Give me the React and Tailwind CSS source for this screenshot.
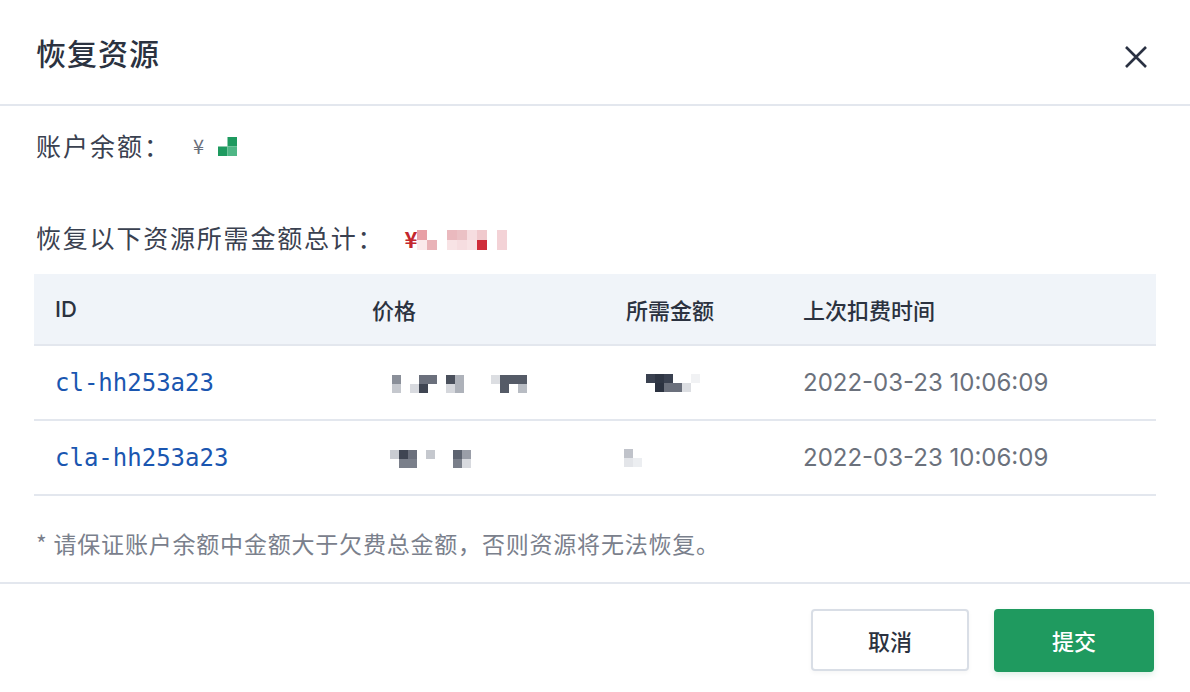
import React from "react";

const CJK = { fontFamily: '"Noto Sans CJK SC", "Noto Sans", sans-serif' };

// pixelated redaction blocks: [col, row, color]
function Mosaic({ cells, size = 9, rows = 2, cols = 15, className = "" }) {
  return (
    <svg
      width={cols * size}
      height={rows * size}
      viewBox={`0 0 ${cols * size} ${rows * size}`}
      className={className}
    >
      {cells.map(([c, r, fill], i) => (
        <rect key={i} x={c * size} y={r * size} width={size} height={size} fill={fill} />
      ))}
    </svg>
  );
}

const rows = [
  {
    id: "cl-hh253a23",
    price: {
      cols: 15,
      pl: "pl-[41px]",
      cells: [
        [0, 0, "#8a8f99"], [0, 1, "#c5c8ce"],
        [2, 1, "#d8dadf"], [3, 0, "#6b707c"], [3, 1, "#3f4552"], [4, 0, "#6b707c"],
        [6, 0, "#4a505c"], [6, 1, "#d5d7dc"], [7, 0, "#aeb2ba"], [7, 1, "#aeb2ba"],
        [11, 0, "#dcdee2"], [12, 0, "#555b67"], [12, 1, "#555b67"], [13, 0, "#555b67"],
        [14, 0, "#555b67"], [14, 1, "#b8bcc3"],
      ],
    },
    amount: {
      cols: 6,
      cells: [
        [0, 0, "#3a4150"], [1, 0, "#2f3644"], [2, 0, "#3a4150"],
        [1, 1, "#2b3240"], [2, 1, "#6b707c"], [3, 1, "#6b707c"], [4, 1, "#dcdee2"], [5, 0, "#f1f2f4"],
      ],
      pl: "pl-[41px]",
    },
    time: "2022-03-23 10:06:09",
  },
  {
    id: "cla-hh253a23",
    price: {
      cols: 10,
      pl: "pl-[39px]",
      cells: [
        [0, 0, "#c9ccd2"], [1, 0, "#3f4552"], [2, 0, "#6b707c"],
        [1, 1, "#7a7f8a"], [2, 1, "#7a7f8a"],
        [4, 0, "#c5c8ce"],
        [7, 0, "#5d6370"], [8, 0, "#9a9ea8"], [7, 1, "#7a7f8a"], [8, 1, "#d8dadf"],
      ],
    },
    amount: {
      cols: 2,
      cells: [[0, 0, "#c0c3ca"], [0, 1, "#e3e5e9"], [1, 1, "#eceef1"]],
      pl: "pl-[19px]",
    },
    time: "2022-03-23 10:06:09",
  },
];

const totalCells = [
  [0, 0, "#e8a0a6"], [0, 1, "#fbe9eb"], [1, 1, "#e9b2b7"],
  [3, 0, "#eab9be"], [4, 0, "#ebc1c5"], [3, 1, "#f8e3e5"], [4, 1, "#f6dde0"],
  [5, 1, "#f8e3e5"], [5, 0, "#f6dde0"], [6, 0, "#f0c9cd"], [6, 1, "#cf2e3a"],
  [8, 0, "#f3d2d6"], [8, 1, "#f3d2d6"],
];

export default function App() {
  return (
    <div className="w-[1190px] h-[692px] bg-white text-[#2b3240] flex flex-col" style={CJK}>
      {/* header */}
      <div className="h-[106px] px-[36px] flex items-center justify-between border-b-2 border-[#e3e7ee] shrink-0">
        <h1 className="text-[30px] font-medium tracking-[1px] text-[#2b3240]">恢复资源</h1>
        <button className="mt-[10px] mr-[6px] text-[#2a3142]">
          <svg width="24" height="24" viewBox="0 0 24 24" fill="none" stroke="currentColor" strokeWidth="2.6">
            <path d="M2 2 L22 22 M22 2 L2 22" />
          </svg>
        </button>
      </div>

      {/* body */}
      <div className="px-[34px] pt-[22px] flex-1">
        <div className="h-[36px] flex items-center pl-[2px] text-[25px] text-[#3a4150]">
          <span className="tracking-[2px]">账户余额：</span>
          <span className="ml-[22px] text-[20px] text-[#6b707c]">¥</span>
          <Mosaic
            className="ml-[14px]"
            size={9.5}
            cols={2}
            cells={[[1, 0, "#1e9a5f"], [0, 1, "#1e9a5f"], [1, 1, "#4fb786"]]}
          />
        </div>

        <div className="mt-[56px] h-[36px] flex items-center pl-[2px] text-[25px] text-[#3a4150]">
          <span className="tracking-[1.8px]">恢复以下资源所需金额总计：</span>
          <span className="ml-[20px] text-[22px] font-bold text-[#c4262e]">¥</span>
          <Mosaic size={10} cols={9} cells={totalCells} className="mt-[4px]" />
        </div>

        {/* table */}
        <div className="mt-[18px]">
          <div className="grid grid-cols-[317px_254px_177px_1fr] h-[72px] items-center bg-[#f0f4f9] border-b-2 border-[#e3e7ee] text-[22px] font-medium text-[#2b3240]">
            <div className="pl-[21px]" style={{ fontFamily: "Inter, sans-serif" }}>ID</div>
            <div className="pl-[21px]">价格</div>
            <div className="pl-[21px]">所需金额</div>
            <div className="pl-[21px]">上次扣费时间</div>
          </div>
          {rows.map((r) => (
            <div
              key={r.id}
              className="grid grid-cols-[317px_254px_177px_1fr] h-[75px] items-center border-b-2 border-[#e3e7ee]"
            >
              <div
                className="pl-[21px] text-[24px] text-[#1a56b0]"
                style={{ fontFamily: '"DejaVu Sans Mono", "Liberation Mono", monospace' }}
              >
                {r.id}
              </div>
              <div className={`${r.price.pl} pt-[2px] flex`}>
                <Mosaic cells={r.price.cells} cols={r.price.cols} size={9} />
              </div>
              <div className={`${r.amount.pl} flex`}>
                <Mosaic cells={r.amount.cells} cols={r.amount.cols} size={9} />
              </div>
              <div
                className="pl-[21px] text-[24px] text-[#6b717c]"
                style={{ fontFamily: "Inter, sans-serif" }}
              >
                {r.time}
              </div>
            </div>
          ))}
        </div>

        <p className="mt-[30px] pl-[2px] text-[23px] text-[#7a808c] tracking-[0.8px]">
          * 请保证账户余额中金额大于欠费总金额，否则资源将无法恢复。
        </p>
      </div>

      {/* footer */}
      <div className="h-[110px] shrink-0 border-t-2 border-[#e3e7ee] px-[36px] pt-[25px] flex justify-end gap-[25px]">
        <button className="w-[158px] h-[62px] rounded-[4px] border-2 border-[#d9dee6] bg-white text-[22px] font-medium text-[#2b3240] shadow-[0_2px_4px_rgba(0,0,0,0.04)]">
          取消
        </button>
        <button className="w-[160px] h-[63px] rounded-[4px] bg-[#1f9a5f] text-[22px] font-medium text-white shadow-[0_3px_6px_rgba(31,154,95,0.15)]">
          提交
        </button>
      </div>
    </div>
  );
}
